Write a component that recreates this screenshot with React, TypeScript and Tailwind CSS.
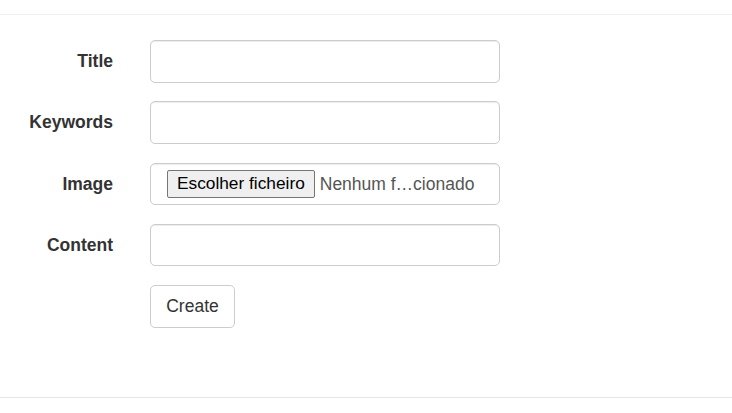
import React from "react";

const Row = ({ label, children }: { label: string; children?: React.ReactNode }) => (
  <div className="flex items-center h-[42.5px]">
    <div className="w-[113px] text-right font-bold text-[17.5px] text-[#333]">{label}</div>
    <div className="ml-[37px] w-[350px] h-full">{children}</div>
  </div>
);

const inputCls =
  "w-full h-full border border-[#ccc] rounded-[5px] bg-white shadow-[inset_0_1px_1px_rgba(0,0,0,0.075)]";

export default function App() {
  return (
    <div className="w-[732px] h-[413px] bg-white" style={{ fontFamily: '"Liberation Sans", Arial, sans-serif' }}>
      <div className="pt-[14px]">
        <div className="h-px bg-[#eee]" />
      </div>
      <div className="mt-[25px] flex flex-col gap-[18.75px]">
        <Row label="Title">
          <div className={inputCls} />
        </Row>
        <Row label="Keywords">
          <div className={inputCls} />
        </Row>
        <Row label="Image">
          <div className={inputCls + " flex items-center pl-[16px]"}>
            <div className="h-[28px] px-[9px] flex items-center border border-[#767676] rounded-[2px] bg-[#efefef] text-[17.3px] text-black">
              Escolher ficheiro
            </div>
            <span className="ml-[5px] text-[17.5px] text-[#555]">Nenhum f…cionado</span>
          </div>
        </Row>
        <Row label="Content">
          <div className={inputCls} />
        </Row>
        <div className="flex h-[42.5px]">
          <div className="ml-[150px] h-full w-[85px] border border-[#ccc] rounded-[5px] bg-white flex items-center justify-center text-[17.5px] text-[#333]">
            Create
          </div>
        </div>
      </div>
      <div className="mt-[69.5px] h-px bg-[#e5e5e5]" />
    </div>
  );
}
